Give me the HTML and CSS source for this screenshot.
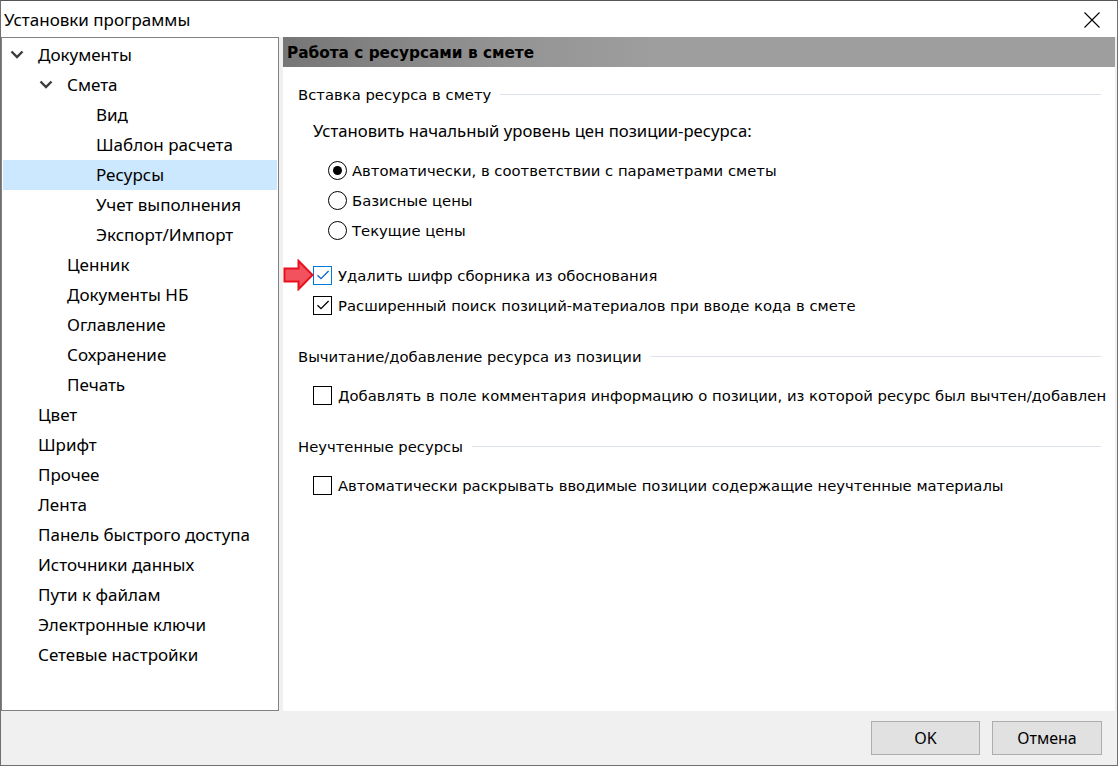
FILE: index.html
```html
<!DOCTYPE html>
<html lang="ru">
<head>
<meta charset="utf-8">
<title>Установки программы</title>
<link rel="stylesheet" href="styles.css">
</head>
<body>
<div class="window">
  <div class="titlebar">
    <span class="title">Установки программы</span>
    <svg class="close" width="16" height="16" viewBox="0 0 16 16"><path d="M0.5 0.5L15.5 15.5M15.5 0.5L0.5 15.5" stroke="#000" stroke-width="1.1" fill="none"/></svg>
  </div>
  <div class="main">
    <div class="tree">
      <div class="node l0"><svg class="chev" width="14" height="9" viewBox="0 0 14 9"><path d="M1.5 1.5L7 7L12.5 1.5" stroke="#3c3c3c" stroke-width="2.4" fill="none"/></svg><span>Документы</span></div>
      <div class="node l1"><svg class="chev" width="14" height="9" viewBox="0 0 14 9"><path d="M1.5 1.5L7 7L12.5 1.5" stroke="#3c3c3c" stroke-width="2.4" fill="none"/></svg><span>Смета</span></div>
      <div class="node l2"><span>Вид</span></div>
      <div class="node l2"><span>Шаблон расчета</span></div>
      <div class="node l2 selected"><span>Ресурсы</span></div>
      <div class="node l2"><span>Учет выполнения</span></div>
      <div class="node l2"><span>Экспорт/Импорт</span></div>
      <div class="node l1 leaf"><span>Ценник</span></div>
      <div class="node l1 leaf"><span>Документы НБ</span></div>
      <div class="node l1 leaf"><span>Оглавление</span></div>
      <div class="node l1 leaf"><span>Сохранение</span></div>
      <div class="node l1 leaf"><span>Печать</span></div>
      <div class="node l0 leaf"><span>Цвет</span></div>
      <div class="node l0 leaf"><span>Шрифт</span></div>
      <div class="node l0 leaf"><span>Прочее</span></div>
      <div class="node l0 leaf"><span>Лента</span></div>
      <div class="node l0 leaf"><span>Панель быстрого доступа</span></div>
      <div class="node l0 leaf"><span>Источники данных</span></div>
      <div class="node l0 leaf"><span>Пути к файлам</span></div>
      <div class="node l0 leaf"><span>Электронные ключи</span></div>
      <div class="node l0 leaf"><span>Сетевые настройки</span></div>
    </div>
    <div class="panel">
      <div class="panel-head">Работа с ресурсами в смете</div>
      <div class="panel-body">
        <div class="group-title g1"><span>Вставка ресурса в смету</span><i class="rule"></i></div>
        <div class="label-row">Установить начальный уровень цен позиции-ресурса:</div>
        <div class="radios">
          <div class="radio-row"><span class="radio on"></span><span>Автоматически, в соответствии с параметрами сметы</span></div>
          <div class="radio-row"><span class="radio"></span><span>Базисные цены</span></div>
          <div class="radio-row"><span class="radio"></span><span>Текущие цены</span></div>
        </div>
        <div class="checks">
          <div class="check-row">
            <svg class="arrow" width="31" height="32" viewBox="0 0 31 32"><path d="M1.5 9.5H15.5V1.8L29.5 16L15.5 30.2V22.5H1.5Z" fill="#f2525e" stroke="#e8101e" stroke-width="2" stroke-linejoin="miter"/></svg>
            <span class="check focus"><svg width="16" height="16" viewBox="0 0 16 16"><path d="M2.5 8.2L6 11.6L13.6 4" stroke="#0a64c8" stroke-width="1.3" fill="none"/></svg></span><span>Удалить шифр сборника из обоснования</span>
          </div>
          <div class="check-row"><span class="check"><svg width="16" height="16" viewBox="0 0 16 16"><path d="M2.5 8.2L6 11.6L13.6 4" stroke="#000" stroke-width="1.3" fill="none"/></svg></span><span>Расширенный поиск позиций-материалов при вводе кода в смете</span></div>
        </div>
        <div class="group-title g2"><span>Вычитание/добавление ресурса из позиции</span><i class="rule"></i></div>
        <div class="check-row single"><span class="check"></span><span>Добавлять в поле комментария информацию о позиции, из которой ресурс был вычтен/добавлен</span></div>
        <div class="group-title g2"><span>Неучтенные ресурсы</span><i class="rule"></i></div>
        <div class="check-row single"><span class="check"></span><span>Автоматически раскрывать вводимые позиции содержащие неучтенные материалы</span></div>
      </div>
    </div>
  </div>
  <div class="footer">
    <button class="btn ok">OK</button>
    <button class="btn">Отмена</button>
  </div>
</div>
</body>
</html>
```
FILE: styles.css
```css
* { box-sizing: border-box; }
html, body { margin: 0; padding: 0; }
body {
  width: 1118px;
  height: 766px;
  background: #3a3a3a;
  overflow: hidden;
  font-family: "Noto Sans", sans-serif;
  color: #000;
}
.window {
  width: 1118px;
  height: 766px;
  border: 1px solid #6f6f6f;
  border-top-color: #555;
  background: #f0f0f0;
  display: flex;
  flex-direction: column;
}
.titlebar {
  height: 36px;
  flex: none;
  background: #fff;
  display: flex;
  align-items: center;
  justify-content: space-between;
  padding: 0 17px 0 3px;
}
.title {
  font-size: 17px;
  line-height: 20px;
  padding-top: 1px;
}
.close { display: block; margin-top: 1px; }
.main {
  flex: none;
  height: 674px;
  display: flex;
  gap: 4px;
}
.tree {
  width: 278px;
  height: 674px;
  background: #fff;
  border: 1px solid #828282;
  padding: 2px 1px 0 1px;
  font-size: 17px;
}
.node {
  height: 30px;
  display: flex;
  align-items: center;
  white-space: nowrap;
  line-height: 20px;
}
.node.selected { background: #cce8ff; }
.chev { flex: none; margin-right: 14px; margin-top: -1px; }
.l0 { padding-left: 7px; }
.l1 { padding-left: 36px; }
.l2 { padding-left: 93px; }
.l0.leaf { padding-left: 35px; }
.l1.leaf { padding-left: 64px; }
.panel {
  width: 832px;
  height: 674px;
  background: #fff;
  display: flex;
  flex-direction: column;
}
.panel-head {
  height: 30px;
  flex: none;
  background: linear-gradient(to right, #767676 0%, #929292 25%, #9e9e9e 45%, #9e9e9e 100%);
  font-family: "DejaVu Sans", sans-serif;
  font-weight: bold;
  font-size: 15.3px;
  display: flex;
  align-items: center;
  padding-left: 4px;
  padding-top: 1px;
  color: #000;
}
.panel-body {
  font-family: "DejaVu Sans", sans-serif;
  font-size: 14.8px;
  padding-left: 15px;
  padding-right: 14px;
  display: flex;
  flex-direction: column;
}
.group-title {
  height: 30px;
  display: flex;
  align-items: center;
  white-space: nowrap;
}
.group-title.g1 { margin-top: 12px; }
.group-title.g2 { margin-top: 21px; }
.rule {
  flex: 1;
  height: 1px;
  background: #dce2e8;
  margin-left: 9px;
  margin-top: 1px;
}
.label-row {
  height: 30px;
  margin-top: 6px;
  padding-left: 15px;
  display: flex;
  align-items: center;
  font-family: "Noto Sans", sans-serif;
  font-size: 16.7px;
}
.radios { margin-top: 10px; padding-left: 30px; }
.radio-row {
  height: 30px;
  display: flex;
  align-items: center;
  gap: 5px;
}
.radio {
  width: 19px;
  height: 19px;
  border: 1px solid #000;
  border-radius: 50%;
  flex: none;
  display: flex;
  align-items: center;
  justify-content: center;
}
.radio.on::after {
  content: "";
  width: 9px;
  height: 9px;
  border-radius: 50%;
  background: #000;
}
.checks { margin-top: 15px; }
.check-row {
  height: 30px;
  display: flex;
  align-items: center;
  gap: 6px;
  padding-left: 15px;
  position: relative;
  white-space: nowrap;
}
.check-row.single { margin-top: 9px; }
.check {
  width: 19px;
  height: 19px;
  border: 1px solid #000;
  flex: none;
  display: flex;
  align-items: center;
  justify-content: center;
  background: #fff;
}
.check svg { display: block; }
.check.focus { border-color: #0078d7; }
.arrow {
  position: absolute;
  left: -15px;
  top: -1px;
}
.footer {
  flex: 1;
  display: flex;
  justify-content: flex-end;
  align-items: flex-start;
  gap: 12px;
  padding: 10px 15px 0 0;
}
.btn {
  width: 110px;
  height: 34px;
  background: #e1e1e1;
  border: 1px solid #adadad;
  font-family: "Noto Sans", sans-serif;
  font-size: 16px;
  color: #000;
  padding: 0;
}
.btn.ok { width: 109px; }
```
